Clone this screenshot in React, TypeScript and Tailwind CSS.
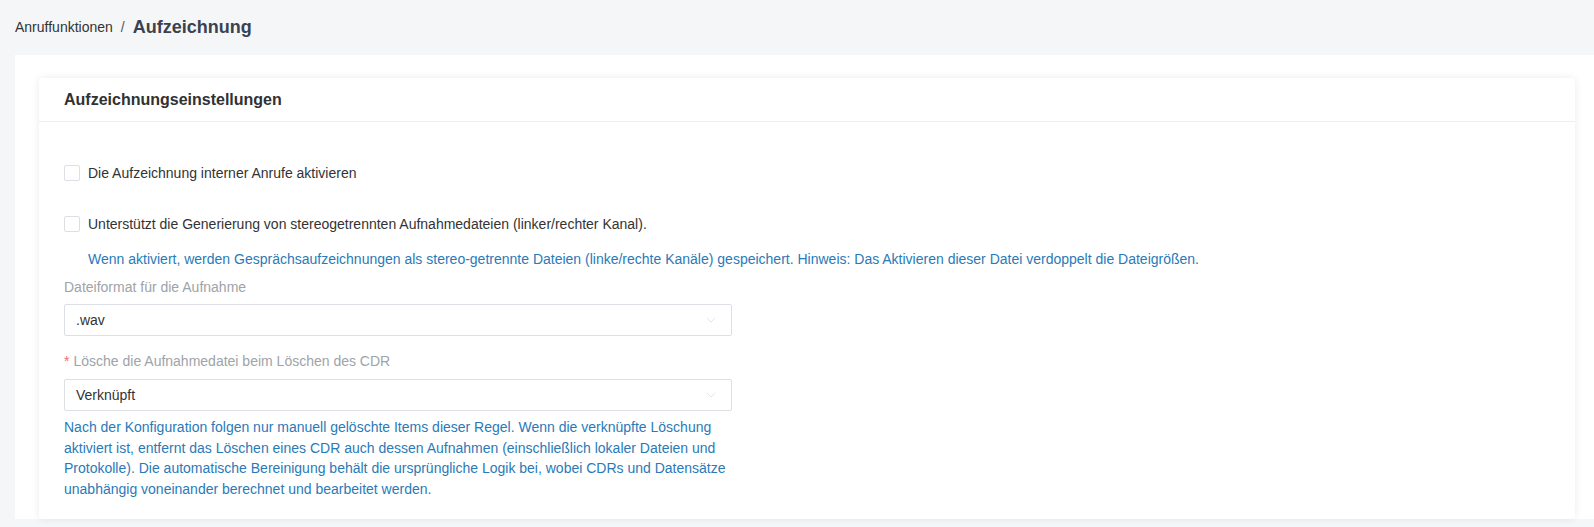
import { ChevronDown } from "lucide-react";

const font = { fontFamily: '"Liberation Sans", Arial, sans-serif' };

const Checkbox = ({ label }: { label: string }) => (
  <label className="flex h-8 items-center gap-2 cursor-pointer">
    <span className="inline-block h-4 w-4 rounded-[2px] border border-[#dcdfe6] bg-white" />
    <span className="text-sm text-[#333]">{label}</span>
  </label>
);

const Select = ({ value }: { value: string }) => (
  <div className="flex h-8 w-[668px] items-center justify-between rounded-[2px] border border-[#dcdfe6] bg-white pl-[11px] pr-[12px]">
    <span className="text-sm text-[#333]">{value}</span>
    <ChevronDown className="h-4 w-4 text-[#d3d6db]" strokeWidth={1} />
  </div>
);

export default function App() {
  return (
    <div className="min-h-screen bg-[#f5f6f8]" style={font}>
      {/* Breadcrumb */}
      <div className="flex h-[55px] items-center pl-[15px] pb-[2px]">
        <span className="text-sm text-[#333]">Anruffunktionen</span>
        <span className="mx-[8px] text-sm text-[#555]">/</span>
        <span className="text-lg font-bold text-[#3a4250]">Aufzeichnung</span>
      </div>

      <div className="ml-[15px] bg-white pl-[24px] pr-[19px] pt-[23px]">
        <div className="rounded-[3px] bg-white shadow-[0_0_8px_rgba(0,0,0,0.08)]">
          {/* Card header */}
          <div className="flex h-[44px] items-center border-b border-[#ebeef2] px-[25px]">
            <h2 className="text-base font-bold text-[#303133]">
              Aufzeichnungseinstellungen
            </h2>
          </div>

          {/* Card body */}
          <div className="px-[25px] pt-[35px] pb-[20px]">
            <Checkbox label="Die Aufzeichnung interner Anrufe aktivieren" />
            <div className="mt-[19px]">
              <Checkbox label="Unterstützt die Generierung von stereogetrennten Aufnahmedateien (linker/rechter Kanal)." />
            </div>
            <p className="mt-[9px] pl-[24px] text-sm leading-[21px] text-[#2a7ab8]">
              Wenn aktiviert, werden Gesprächsaufzeichnungen als stereo-getrennte Dateien (linke/rechte Kanäle) gespeichert. Hinweis: Das Aktivieren dieser Datei verdoppelt die Dateigrößen.
            </p>

            <div className="mt-[7px] text-sm leading-[21px] text-[#a0a3a8]">
              Dateiformat für die Aufnahme
            </div>
            <div className="mt-[6px]">
              <Select value=".wav" />
            </div>

            <div className="mt-[15px] text-sm leading-[21px] text-[#a0a3a8]">
              <span className="mr-1 text-[#f56c6c]">*</span>
              Lösche die Aufnahmedatei beim Löschen des CDR
            </div>
            <div className="mt-[7px]">
              <Select value="Verknüpft" />
            </div>

            <p className="mt-[6px] w-[668px] text-sm leading-[20.5px] text-[#2a7ab8]">
              Nach der Konfiguration folgen nur manuell gelöschte Items dieser Regel. Wenn die verknüpfte Löschung aktiviert ist, entfernt das Löschen eines CDR auch dessen Aufnahmen (einschließlich lokaler Dateien und Protokolle). Die automatische Bereinigung behält die ursprüngliche Logik bei, wobei CDRs und Datensätze unabhängig voneinander berechnet und bearbeitet werden.
            </p>
          </div>
        </div>
      </div>
    </div>
  );
}
